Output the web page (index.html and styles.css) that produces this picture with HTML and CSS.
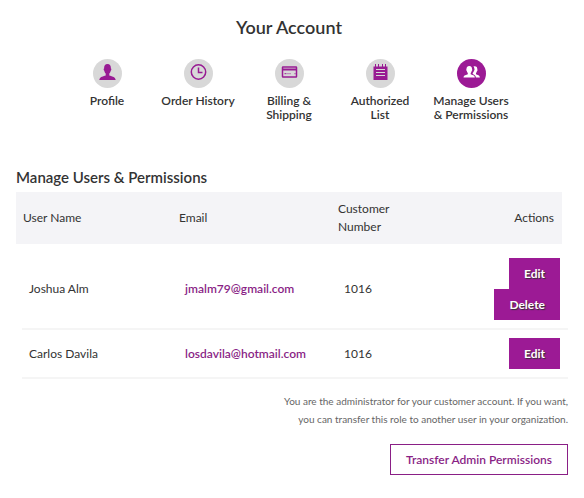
FILE: index.html
```html
<!DOCTYPE html>
<html lang="en">
<head>
    <meta charset="UTF-8">
    <meta name="viewport" content="width=device-width, initial-scale=1.0">
    <title>Your Account</title>
    <link rel="stylesheet" href="styles.css">
</head>
<body>
    <main class="account">
        <h1>Your Account</h1>
        <nav class="account-nav">
            <a href="#profile">
                <svg class="icon" viewBox="0 0 29 29">
                    <path d="M14.500 5c2.400 0 3.600 1.800 3.400 4.500.7.100.5 1.900-.2 2.300-.3 1.500-.8 2.200-1.400 2.800v1.800c1.800.9 6.200 1 6.400 4.600H6.300c.2-3.600 4.600-3.700 6.400-4.600v-1.800c-.6-.6-1.100-1.300-1.400-2.800-.7-.4-.9-2.200-.2-2.300-.2-2.700 1-4.500 3.400-4.500z"/>
                </svg>
                <span>Profile</span>
            </a>
            <a href="#orders">
                <svg class="icon outline" viewBox="0 0 29 29">
                    <circle cx="14.500" cy="13" r="7.200"/>
                    <path d="M14.500 8.500v5h4"/>
                </svg>
                <span>Order History</span>
            </a>
            <a href="#billing">
                <svg class="icon outline" viewBox="0 0 29 29">
                    <rect x="7.500" y="8" width="14" height="10" rx="0.500"/>
                    <path d="M7.500 10.500h14" stroke-width="2"/>
                    <path d="M9.500 14.700h2m1 0h1m1 0h1m4 0h1" stroke-width="1"/>
                </svg>
                <span>Billing &amp; Shipping</span>
            </a>
            <a href="#authorized">
                <svg class="icon" viewBox="0 0 29 29">
                    <path d="M7.500 7.500h1.500v-2.500h1v2.500h2v-2.500h1v2.500h3v-2.500h1v2.500h2v-2.500h1v2.500h1.500v13.500h-14z"/>
                    <path class="cut" d="M10 10.500h9M10 13.500h9M10 16.500h9"/>
                </svg>
                <span>Authorized List</span>
            </a>
            <a href="#users" class="active">
                <svg class="icon" viewBox="0 0 29 29">
                    <path d="M17.600 7.200c2 0 2.900 1.200 2.700 3.300.5.200.3 1.300-.3 1.600-.2 1-.6 1.500-1 1.900v1.200c1.300.6 3.700.8 3.900 3.300h-4c-.2-2.200-1.900-2.900-3.200-3.500v-1c.7-.7 1-1.300 1.200-2.100.7-.6.800-1.700.4-2.300 0-1-.3-1.700-.8-2.200.3-.2.700-.2 1.100-.2z"/>
                    <path d="M12.300 7c2 0 2.900 1.300 2.700 3.300.5.200.3 1.300-.3 1.600-.2 1-.6 1.600-1 2v1.300c1.300.6 4 .9 4.200 3.300H6.500c.2-2.400 3-2.700 4.300-3.300v-1.300c-.4-.4-.8-1-1-2-.6-.3-.8-1.400-.3-1.600-.2-2 .8-3.300 2.800-3.300z"/>
                </svg>
                <span>Manage Users &amp;&nbsp;Permissions</span>
            </a>
        </nav>

        <h2>Manage Users &amp; Permissions</h2>
        <table class="users">
            <thead>
                <tr>
                    <th>User Name</th>
                    <th>Email</th>
                    <th>Customer Number</th>
                    <th class="actions">Actions</th>
                </tr>
            </thead>
            <tbody>
                <tr>
                    <td>Joshua Alm</td>
                    <td><a href="mailto:jmalm79@gmail.com">jmalm79@gmail.com</a></td>
                    <td>1016</td>
                    <td class="actions">
                        <button type="button" class="btn">Edit</button>
                        <button type="button" class="btn">Delete</button>
                    </td>
                </tr>
                <tr>
                    <td>Carlos Davila</td>
                    <td><a href="mailto:losdavila@hotmail.com">losdavila@hotmail.com</a></td>
                    <td>1016</td>
                    <td class="actions">
                        <button type="button" class="btn">Edit</button>
                    </td>
                </tr>
            </tbody>
        </table>

        <div class="transfer">
            <p>You are the administrator for your customer account. If you want, you can transfer this role to another user in your organization.</p>
            <button type="button" class="btn-outline">Transfer Admin Permissions</button>
        </div>
    </main>
</body>
</html>
```
FILE: styles.css
```css
body {
    margin: 0;
    font-family: Lato, "Liberation Sans", sans-serif;
    font-size: 12px;
    line-height: 18px;
    color: #333;
    background-color: #fff;
}
.account {
    padding: 15px 22px 16px 16px;
}
h1 {
    margin: 0 0 20px;
    font-size: 18px;
    line-height: 24px;
    font-weight: 600;
    text-align: center;
}
h2 {
    margin: 0 0 5px;
    font-size: 15px;
    line-height: 20px;
    font-weight: 600;
}
.account-nav {
    display: flex;
    justify-content: center;
    margin-bottom: 45px;
}
.account-nav a {
    width: calc(100% / 6);
    box-sizing: border-box;
    padding: 0 6px;
    display: flex;
    flex-direction: column;
    align-items: center;
    gap: 6px;
    font-weight: 600;
    line-height: 14px;
    text-align: center;
    text-decoration: none;
    color: #333;
}
.icon {
    width: 29px;
    height: 29px;
    border-radius: 50%;
    background-color: #d8d8d8;
    fill: #981b93;
}
.icon.outline {
    fill: none;
    stroke: #981b93;
    stroke-width: 1.5;
}
.icon .cut {
    stroke: #d8d8d8;
    stroke-width: 1;
}
.active .icon {
    background-color: #9c1a95;
    fill: #fff;
}
.users {
    display: block;
}
.users thead, .users tbody {
    display: block;
}
.users thead {
    background-color: #f4f4f7;
}
.users tbody {
    margin: 6px -6px 0 6px;
}
.users tr {
    display: grid;
    grid-template-columns: 156fr 159fr 90fr 141fr;
    align-items: center;
}
.users tbody tr {
    border-bottom: 2px solid #f5f5f5;
}
.users th, .users td {
    padding: 8px 7px;
    font-weight: 400;
    text-align: left;
}
.users td a {
    color: #8a1f86;
    font-weight: 600;
    text-decoration: none;
}
.users .actions {
    display: flex;
    flex-direction: column;
    align-items: flex-end;
    padding-right: 8px;
}
.btn {
    height: 31px;
    padding: 0 15px;
    border: 0;
    background-color: #9c1a95;
    color: #fff;
    font-family: inherit;
    font-size: 12px;
    font-weight: 700;
    text-shadow: 1px 1px 1px #333;
    cursor: pointer;
}
.transfer {
    display: flex;
    flex-direction: column;
    align-items: flex-end;
    gap: 16px;
    margin: 13px -6px 0 0;
}
.transfer p {
    max-width: 300px;
    margin: 0;
    font-size: 10px;
    text-align: right;
    color: #666;
}
.btn-outline {
    height: 31px;
    padding: 0 15px;
    border: 1px solid #8a1f86;
    background-color: #fff;
    color: #8a1f86;
    font-family: inherit;
    font-size: 12px;
    font-weight: 600;
    cursor: pointer;
}
```
